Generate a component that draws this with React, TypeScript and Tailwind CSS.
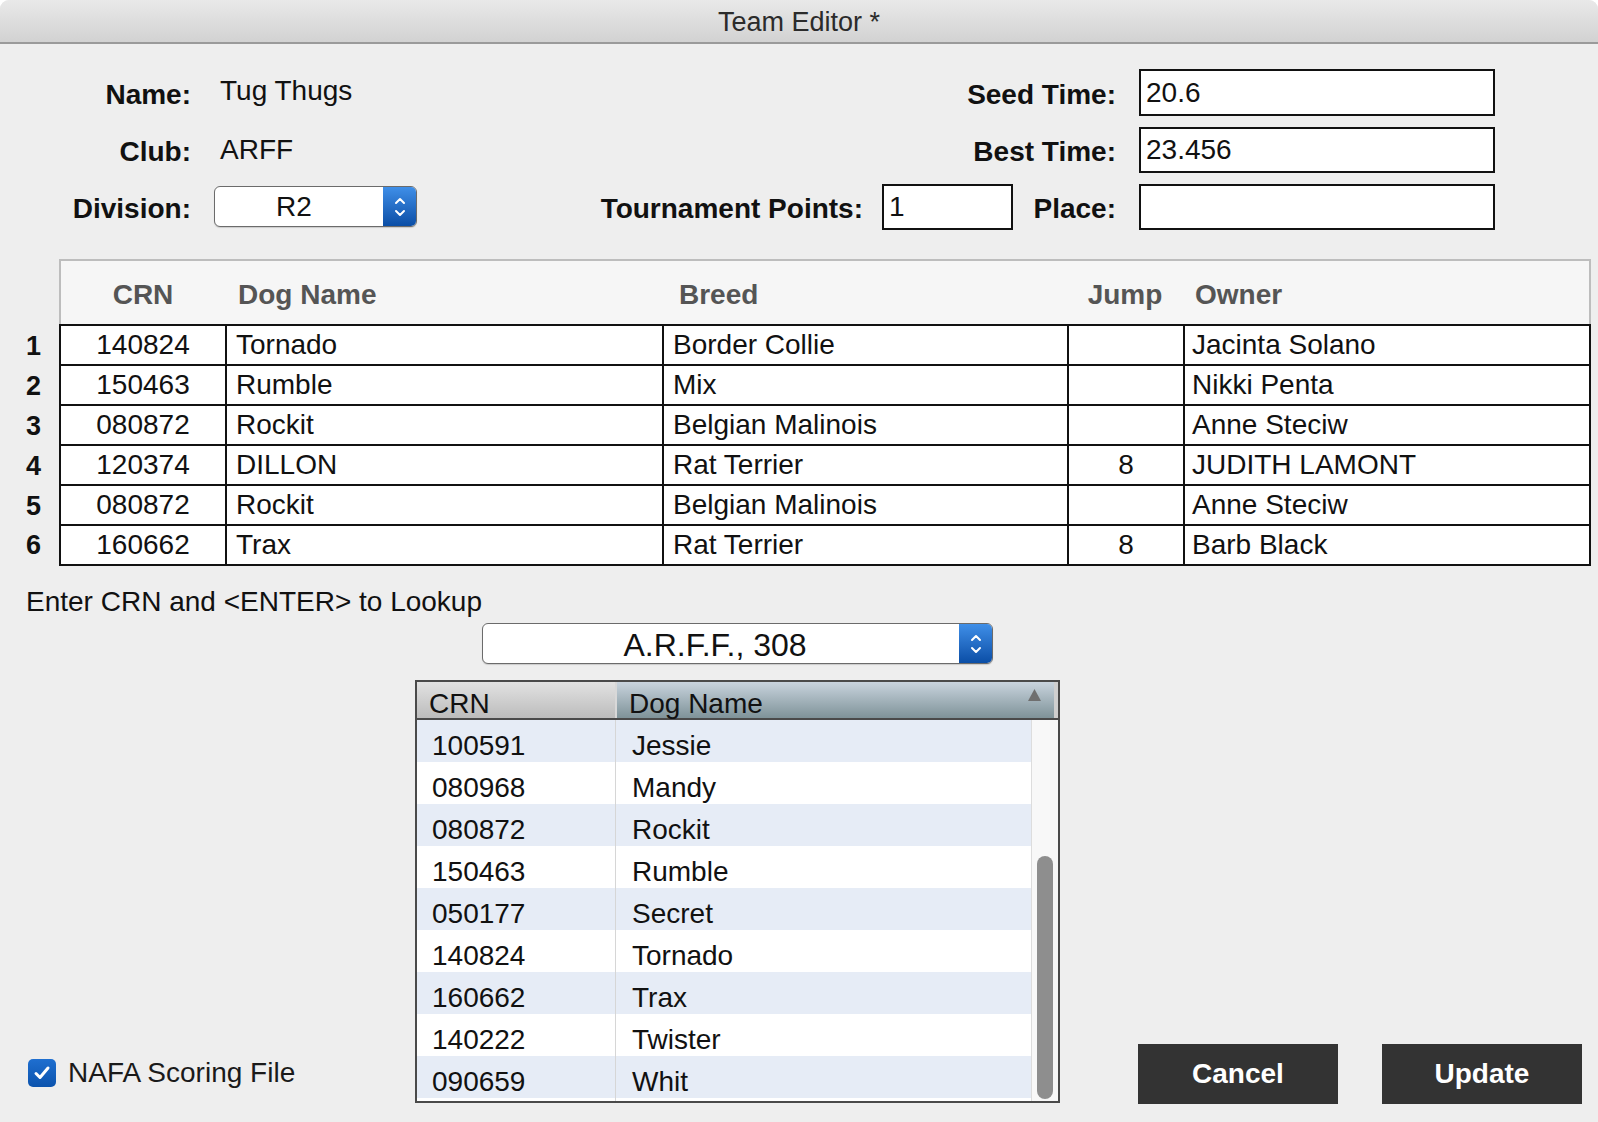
import React from "react";

const team = [
  { crn: "140824", name: "Tornado", breed: "Border Collie", jump: "", owner: "Jacinta Solano" },
  { crn: "150463", name: "Rumble", breed: "Mix", jump: "", owner: "Nikki Penta" },
  { crn: "080872", name: "Rockit", breed: "Belgian Malinois", jump: "", owner: "Anne Steciw" },
  { crn: "120374", name: "DILLON", breed: "Rat Terrier", jump: "8", owner: "JUDITH LAMONT" },
  { crn: "080872", name: "Rockit", breed: "Belgian Malinois", jump: "", owner: "Anne Steciw" },
  { crn: "160662", name: "Trax", breed: "Rat Terrier", jump: "8", owner: "Barb Black" },
];

const lookup = [
  ["100591", "Jessie"],
  ["080968", "Mandy"],
  ["080872", "Rockit"],
  ["150463", "Rumble"],
  ["050177", "Secret"],
  ["140824", "Tornado"],
  ["160662", "Trax"],
  ["140222", "Twister"],
  ["090659", "Whit"],
];

function Stepper() {
  return (
    <div className="w-[33px] h-full flex items-center justify-center rounded-r-[5px] bg-gradient-to-b from-[#3f8fe8] to-[#0a4ea6]">
      <svg width="12" height="24" viewBox="0 0 12 24" fill="none" stroke="white" strokeWidth="2" strokeLinecap="round" strokeLinejoin="round">
        <path d="M2 8 L6 4 L10 8" />
        <path d="M2 16 L6 20 L10 16" />
      </svg>
    </div>
  );
}

function Select({ value, width, text }: { value: string; width: string; text: string }) {
  return (
    <div className={`${width} h-[41px] flex rounded-[6px] border border-[#6b6b6b] bg-white shadow-[0_1px_1px_rgba(0,0,0,0.15)]`}>
      <div className={`flex-1 flex items-center justify-center ${text} text-[#111]`}>{value}</div>
      <Stepper />
    </div>
  );
}

function Field({ value, width, height }: { value: string; width: string; height: string }) {
  return (
    <div className={`${width} ${height} border-2 border-[#111] bg-white flex items-center pl-[5px] text-[28px] text-[#111]`}>
      {value}
    </div>
  );
}

export default function App() {
  return (
    <div className="bg-white w-[1598px] h-[1122px] font-['Liberation_Sans',Arial,sans-serif]">
      <div className="w-[1598px] h-[1122px] bg-[#eeeeee] rounded-t-[9px] overflow-hidden flex flex-col">
        {/* Title bar */}
        <div className="h-[44px] shrink-0 flex items-center justify-center pt-[2px] bg-gradient-to-b from-[#e9e9e9] to-[#d2d2d2] border-b-2 border-[#9a9a9a] text-[27px] text-[#2b2b2b]">
          Team Editor *
        </div>

        {/* Top fields */}
        <div className="pt-[20px] text-[28px] text-[#111]">
          <div className="h-[57px] flex items-center">
            <div className="w-[191px] text-right font-bold mt-[4px]">Name:</div>
            <div className="ml-[29px] mb-[4px]">Tug Thugs</div>
            <div className="flex-1" />
            <div className="font-bold mt-[4px]">Seed Time:</div>
            <div className="ml-[23px] mr-[103px]">
              <Field value="20.6" width="w-[356px]" height="h-[47px]" />
            </div>
          </div>
          <div className="h-[57px] flex items-center">
            <div className="w-[191px] text-right font-bold mt-[4px]">Club:</div>
            <div className="ml-[29px]">ARFF</div>
            <div className="flex-1" />
            <div className="font-bold mt-[4px]">Best Time:</div>
            <div className="ml-[23px] mr-[103px]">
              <Field value="23.456" width="w-[356px]" height="h-[46px]" />
            </div>
          </div>
          <div className="h-[57px] flex items-center">
            <div className="w-[191px] text-right font-bold mt-[4px]">Division:</div>
            <div className="ml-[23px]">
              <Select value="R2" width="w-[203px]" text="text-[28px] pr-[10px]" />
            </div>
            <div className="flex-1" />
            <div className="font-bold mt-[4px]">Tournament Points:</div>
            <div className="ml-[19px]">
              <Field value="1" width="w-[131px]" height="h-[46px]" />
            </div>
            <div className="w-[103px] text-right font-bold mt-[4px]">Place:</div>
            <div className="ml-[23px] mr-[103px]">
              <Field value="" width="w-[356px]" height="h-[46px]" />
            </div>
          </div>
        </div>

        {/* Team table */}
        <div className="mt-[24px] flex">
          <div className="w-[59px] pt-[67px] font-bold text-[27px] text-[#111]">
            {team.map((_, i) => (
              <div key={i} className={`${i === 5 ? "h-[38px]" : "h-[40px]"} flex items-center justify-center pl-[8px]`}>
                {i + 1}
              </div>
            ))}
          </div>
          <div className="w-[1532px]">
            <div className="h-[65px] flex items-center pt-[4px] border-2 border-b-0 border-[#bdbdbd] bg-[#f6f6f6] font-bold text-[28px] text-[#555]">
              <div className="w-[164px] text-center">CRN</div>
              <div className="w-[437px] pl-[13px]">Dog Name</div>
              <div className="w-[405px] pl-[17px]">Breed</div>
              <div className="w-[116px] text-center">Jump</div>
              <div className="flex-1 pl-[12px]">Owner</div>
            </div>
            <div className="border-2 border-[#111] bg-white text-[28px] text-[#111]">
              {team.map((r, i) => (
                <div key={i} className={`flex ${i === 5 ? "h-[38px]" : "h-[40px] border-b-2 border-[#111]"}`}>
                  <div className="w-[164px] flex items-center justify-center">{r.crn}</div>
                  <div className="w-[437px] border-l-2 border-[#111] flex items-center pl-[9px]">{r.name}</div>
                  <div className="w-[405px] border-l-2 border-[#111] flex items-center pl-[9px]">{r.breed}</div>
                  <div className="w-[116px] border-l-2 border-[#111] flex items-center justify-center">{r.jump}</div>
                  <div className="flex-1 border-l-2 border-[#111] flex items-center pl-[7px]">{r.owner}</div>
                </div>
              ))}
            </div>
          </div>
        </div>

        {/* Lookup */}
        <div className="mt-[21px] ml-[26px] h-[30px] flex items-center text-[28px] text-[#111]">
          Enter CRN and &lt;ENTER&gt; to Lookup
        </div>
        <div className="mt-[6px] ml-[482px]">
          <Select value="A.R.F.F., 308" width="w-[511px]" text="text-[32px] pt-[3px] pr-[12px]" />
        </div>

        <div className="mt-[16px] flex items-end">
          <div className="w-[415px] pl-[28px] mb-[9px] flex items-center gap-[12px]">
            <div className="w-[28px] h-[28px] rounded-[5px] bg-gradient-to-b from-[#1f6fd0] to-[#0b53ad] flex items-center justify-center">
              <svg width="18" height="16" viewBox="0 0 18 16" fill="none" stroke="white" strokeWidth="3" strokeLinecap="round" strokeLinejoin="round">
                <path d="M3 8.5 L7 12.5 L15 3" />
              </svg>
            </div>
            <span className="text-[28px] text-[#1a1a1a]">NAFA Scoring File</span>
          </div>

          <div className="w-[645px] h-[423px] border-2 border-[#4a4a4a] bg-white flex flex-col text-[28px] text-[#111]">
            <div className="h-[38px] shrink-0 flex border-b-2 border-[#4a4a4a]">
              <div className="w-[198px] pl-[12px] pt-[7px] leading-[30px] bg-gradient-to-b from-[#e2e2e2] to-[#bcbcbc]">CRN</div>
              <div className="w-[2px] bg-[#d8d8d8]" />
              <div className="flex-1 flex justify-between pl-[12px] pr-[12px] pt-[7px] leading-[30px] bg-gradient-to-b from-[#c9d4de] to-[#7f9399]">
                <span>Dog Name</span>
                <svg width="15" height="14" viewBox="0 0 15 14" className="mt-[-1px]">
                  <path d="M7.5 1 L14 13 L1 13 Z" fill="#6f6f6f" />
                </svg>
              </div>
              <div className="w-[4px] bg-[#cfcfcf]" />
            </div>
            <div className="flex flex-1 min-h-0">
              <div className="flex-1 relative">
                <div className="absolute top-0 bottom-0 left-[198px] w-px bg-[#d6d6d6]" />
                {lookup.map(([crn, name], i) => (
                  <div key={crn} className={`h-[42px] flex ${i % 2 === 0 ? "bg-[#e6ecf6]" : "bg-white"}`}>
                    <div className="w-[199px] pl-[15px] pt-[11px] leading-[30px]">{crn}</div>
                    <div className="flex-1 pl-[16px] pt-[11px] leading-[30px]">{name}</div>
                  </div>
                ))}
              </div>
              <div className="w-[27px] bg-[#f8f8f8] border-l border-[#dddddd] flex flex-col justify-end items-center pb-[2px]">
                <div className="w-[16px] h-[243px] rounded-full bg-[#8e8e8e]" />
              </div>
            </div>
          </div>

          <div className="ml-[78px] mb-[-1px] flex gap-[44px]">
            <button className="w-[200px] h-[60px] bg-[#333333] text-white font-bold text-[28px]">Cancel</button>
            <button className="w-[200px] h-[60px] bg-[#333333] text-white font-bold text-[28px]">Update</button>
          </div>
        </div>
      </div>
    </div>
  );
}
